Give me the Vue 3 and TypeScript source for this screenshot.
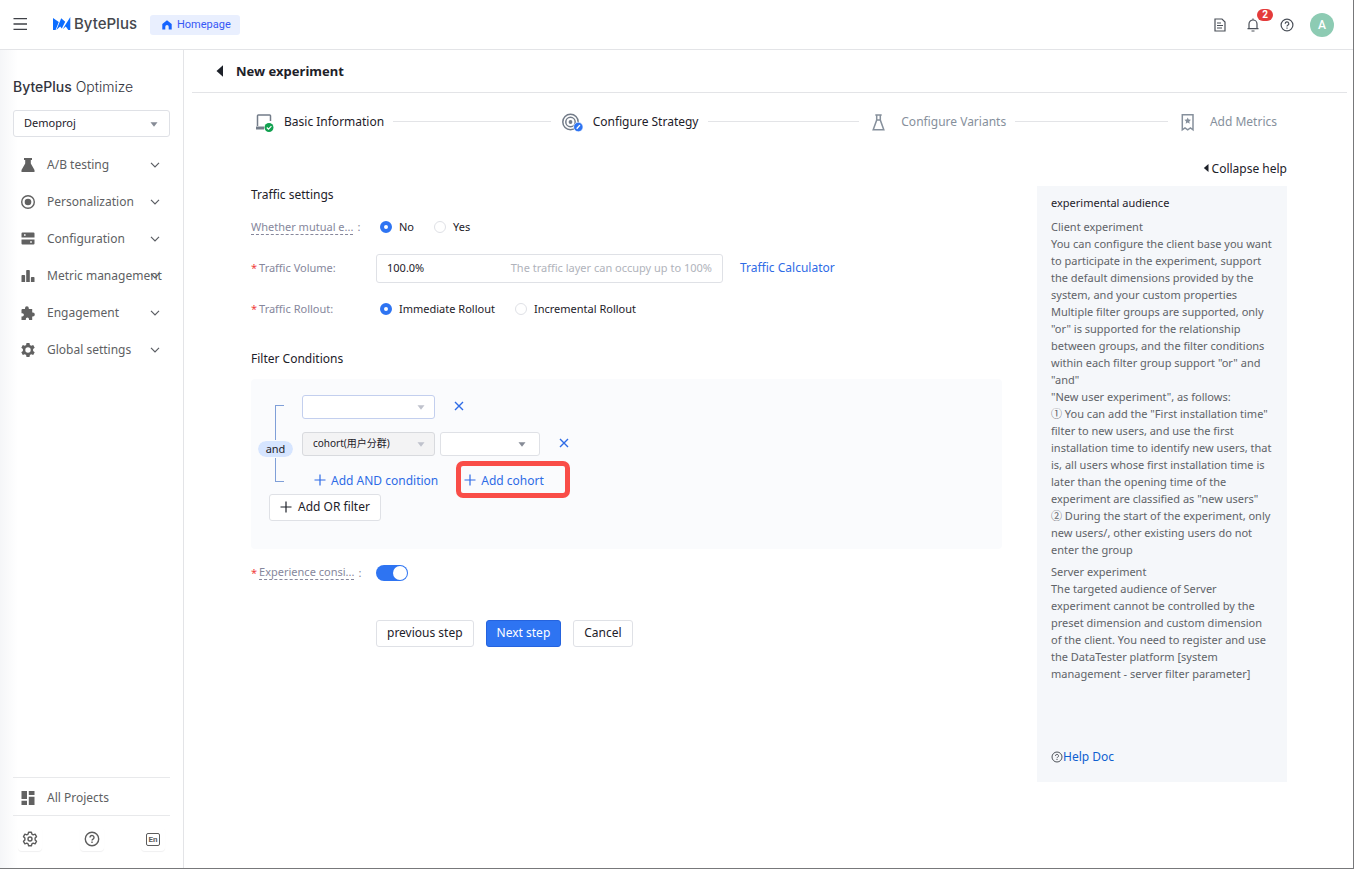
<script setup lang="ts">
import { ref } from 'vue'

interface NavItem {
  label: string
  icon: string
}

interface Step {
  label: string
  icon: string
  muted: boolean
}

const navItems: NavItem[] = [
  { label: 'A/B testing', icon: 'flask' },
  { label: 'Personalization', icon: 'target' },
  { label: 'Configuration', icon: 'server' },
  { label: 'Metric management', icon: 'bars' },
  { label: 'Engagement', icon: 'puzzle' },
  { label: 'Global settings', icon: 'gear' },
]

const steps: Step[] = [
  { label: 'Basic Information', icon: 'laptop', muted: false },
  { label: 'Configure Strategy', icon: 'rings', muted: false },
  { label: 'Configure Variants', icon: 'beaker', muted: true },
  { label: 'Add Metrics', icon: 'bookmark', muted: true },
]

const clientHelp: string[] = [
  'Client experiment',
  'You can configure the client base you want to participate in the experiment, support the default dimensions provided by the system, and your custom properties',
  'Multiple filter groups are supported, only "or" is supported for the relationship between groups, and the filter conditions within each filter group support "or" and "and"',
  '"New user experiment", as follows:',
  '① You can add the "First installation time" filter to new users, and use the first installation time to identify new users, that is, all users whose first installation time is later than the opening time of the experiment are classified as "new users"',
  '② During the start of the experiment, only new users/, other existing users do not enter the group',
]

const serverHelp: string[] = [
  'Server experiment',
  'The targeted audience of Server experiment cannot be controlled by the preset dimension and custom dimension of the client. You need to register and use the DataTester platform [system management - server filter parameter]',
]

const mutual = ref('no')
const rollout = ref('immediate')
const volume = ref('100.0%')
const consistent = ref(true)
</script>

<template>
  <div class="app">
    <header class="topbar">
      <button class="icon-btn menu" aria-label="Menu">
        <svg width="14" height="12" viewBox="0 0 14 12"><path d="M.5 .7h13.500M.5 6h13.500M.5 11.300h13.500" stroke="#3f4147" stroke-width="1.300" /></svg>
      </button>
      <a class="brand" href="#">
        <svg width="18" height="14" viewBox="0 0 18 14"><path fill="#0b6cff" d="M0 1l5.800 4L2.600 13H0zM3.400 13L8.200 1.200l4 3.600-3.400 6.700-1.700-2zM9.600 12.300L17.300 0v13h-2L12.800 9.400z" /></svg>
        <span>BytePlus</span>
      </a>
      <a class="home" href="#">
        <svg width="10" height="10" viewBox="0 0 10 10"><path fill="#1664ff" d="M5 .3L.3 4v5.500h3V6.800a1.700 1.700 0 0 1 3.400 0v2.700h3V4z" /></svg>
        Homepage
      </a>
      <div class="tools">
        <button class="icon-btn" aria-label="Documents">
          <svg width="12" height="14" viewBox="0 0 12 14" fill="none" stroke="#4b5059" stroke-width="1.200"><path d="M1 1h7l3 3v9H1z" /><path d="M3 5h4M3 7.500h6M3 10h5" /></svg>
        </button>
        <button class="icon-btn" aria-label="Notifications">
          <svg width="12" height="14" viewBox="0 0 12 14" fill="none" stroke="#4b5059" stroke-width="1.200"><path d="M.5 10.600h11M2 10.500V6a4 4 0 0 1 8 0v4.500M6 .5v1.500M4.500 13h3" /></svg>
          <span class="badge">2</span>
        </button>
        <button class="icon-btn" aria-label="Help">
          <svg width="14" height="14" viewBox="0 0 14 14" fill="none" stroke="#4b5059" stroke-width="1.200"><circle cx="7" cy="7" r="5.900" /><path d="M5.200 5.700a1.800 1.800 0 1 1 2.600 1.600c-.6.3-.8.600-.8 1.100M7 9.500v1.200" /></svg>
        </button>
        <button class="avatar" aria-label="Account">A</button>
      </div>
    </header>

    <div class="body">
      <aside class="sidebar">
        <div class="product"><b>BytePlus</b> Optimize</div>
        <div class="select project">
          <select aria-label="Project"><option>Demoproj</option></select>
          <svg class="caret" width="8" height="5" viewBox="0 0 8 5"><path d="M.5.300h7L4 4.700z" /></svg>
        </div>
        <nav class="nav">
          <a v-for="item in navItems" :key="item.label" class="nav-item" href="#">
            <svg class="nav-icon" width="16" height="16" viewBox="0 0 16 16">
              <path v-if="item.icon === 'flask'" d="M4 1h8v2h-1.200v3.500L14.500 13v2h-13v-2L5.200 6.500V3H4z" />
              <g v-else-if="item.icon === 'target'"><circle cx="8" cy="8" r="6.300" fill="none" stroke="#616161" stroke-width="1.400" /><circle cx="8" cy="8" r="3.300" /></g>
              <path v-else-if="item.icon === 'server'" fill-rule="evenodd" d="M2.500 1.500h11a1 1 0 0 1 1 1v4h-13v-4a1 1 0 0 1 1-1zM4 3.200v1.600h1.600V3.200zM1.500 8.500h13v4a1 1 0 0 1-1 1h-11a1 1 0 0 1-1-1zM10.200 10.200v1.600h1.600v-1.600z" />
              <path v-else-if="item.icon === 'bars'" d="M2.300 7h2a.8.8 0 0 1 .8.8V14H1.500V7.800A.8.800 0 0 1 2.300 7zM7 2h2a.8.800 0 0 1 .8.800V14H6.200V2.800A.8.800 0 0 1 7 2zM11.700 9h2a.8.800 0 0 1 .8.800V14h-3.600V9.800a.8.800 0 0 1 .8-.8z" />
              <path v-else-if="item.icon === 'puzzle'" d="M2.500 4H5v-.8a1.900 1.900 0 0 1 3.800 0V4h3.400v3.600h.7a1.900 1.900 0 0 1 0 3.800h-.7V15H9v-.8a1.600 1.600 0 0 0-3.200 0v.8H1.500v-3.600h.8a1.600 1.600 0 0 0 0-3.200h-.8V5a1 1 0 0 1 1-1z" />
              <path v-else fill-rule="evenodd" d="M6.500 1h3l.4 2 1.300.8 2-.7 1.500 2.600-1.600 1.400v1.800l1.600 1.400-1.500 2.600-2-.7-1.300.8-.4 2h-3l-.4-2-1.300-.8-2 .7-1.500-2.600 1.600-1.400V7.100L1.300 5.700l1.500-2.600 2 .7L6.100 3zM8 5.300a2.700 2.700 0 1 0 0 5.400 2.700 2.700 0 0 0 0-5.400z" />
            </svg>
            <span class="nav-label">{{ item.label }}</span>
            <svg class="chevron" width="10" height="6" viewBox="0 0 10 6"><path d="M1 .8l4 4 4-4" fill="none" stroke="#5a5d63" stroke-width="1.200" /></svg>
          </a>
        </nav>
        <a class="all-projects" href="#">
          <svg class="nav-icon" width="16" height="16" viewBox="0 0 16 16"><path d="M1.500 1H7v8H1.500zM8.800 1h5.700v4H8.800zM8.800 6.800h5.700V15H8.800zM1.500 10.800H7V15H1.500z" /></svg>
          <span>All Projects</span>
        </a>
        <div class="side-tools">
          <button class="side-btn" aria-label="Settings">
            <svg width="16" height="16" viewBox="0 0 16 16" fill="none" stroke="#5c5c5c" stroke-width="1.400" stroke-linejoin="round"><path d="M6.600 1.200h2.800l.5 1.900 1.300.7 1.900-.6 1.400 2.500-1.400 1.400v1.800l1.400 1.400-1.400 2.500-1.900-.6-1.300.7-.5 1.900H6.600l-.5-1.900-1.300-.7-1.900.6-1.400-2.500 1.400-1.400V7.100L1.500 5.700l1.400-2.500 1.900.6 1.300-.7z" /><circle cx="8" cy="8" r="2" /></svg>
          </button>
          <button class="side-btn" aria-label="Support">
            <svg width="16" height="16" viewBox="0 0 16 16" fill="none" stroke="#5c5c5c" stroke-width="1.400"><circle cx="8" cy="8" r="6.700" /><path d="M6 6.400a2 2 0 1 1 3 1.800c-.7.400-1 .8-1 1.400M8 10.600V12" /></svg>
          </button>
          <button class="side-btn lang" aria-label="Language"><span>En</span></button>
        </div>
      </aside>

      <main class="main">
        <div class="title-row">
          <button class="icon-btn" aria-label="Back">
            <svg width="8" height="12" viewBox="0 0 8 12"><path d="M7 .3v11.400L.5 6z" fill="#1d2129" /></svg>
          </button>
          <h1>New experiment</h1>
        </div>

        <div class="content">
          <ol class="steps">
            <li v-for="step in steps" :key="step.label" class="step" :class="{ muted: step.muted }">
              <svg class="step-icon" width="22" height="20" viewBox="0 0 22 20" fill="none" stroke="#86909c" stroke-width="1.500">
                <g v-if="step.icon === 'laptop'">
                  <path d="M4.500 13V2.800a.8.800 0 0 1 .8-.8h11.400a.8.800 0 0 1 .8.800V8" stroke="#737c89" />
                  <path d="M3 15h8" stroke="#737c89" stroke-width="3" />
                  <circle cx="16" cy="14.500" r="4.500" fill="#12a150" stroke="none" /><path d="M13.800 14.500l1.700 1.700 2.900-3" stroke="#fff" stroke-width="1.200" />
                </g>
                <g v-else-if="step.icon === 'rings'">
                  <circle cx="8.500" cy="9" r="7.700" stroke="#737c89" /><circle cx="8.500" cy="9" r="4.700" stroke="#737c89" /><circle cx="8.500" cy="9" r="1.900" fill="#737c89" stroke="none" />
                  <circle cx="16.300" cy="14" r="4.700" fill="#2e74f2" stroke="#fff" stroke-width=".6" /><path d="M14.700 15.700l3.200-3.600" stroke="#fff" stroke-width="1.400" />
                </g>
                <path v-else-if="step.icon === 'beaker'" d="M5.300 2h6.400M6.700 2v5L3.200 16.800h10.600L10.300 7V2M6.500 7h4" />
                <g v-else>
                  <path d="M3.300 1.800h10.700v15l-2.600-1.900-2.700 1.900-2.700-1.900-2.700 1.900z" /><path d="M8.700 4.400l1 2.100 2.300.3-1.700 1.600.4 2.300-2-1.100-2 1.100.4-2.300-1.700-1.600 2.300-.3z" fill="#86909c" stroke="none" />
                </g>
              </svg>
              <span>{{ step.label }}</span>
              <i class="step-line" />
            </li>
          </ol>

          <div class="columns">
            <form class="form" @submit.prevent>
              <h2>Traffic settings</h2>
              <div class="row">
                <div class="label"><span class="dashed">Whether mutual e...</span><span class="colon">:</span></div>
                <div class="radios">
                  <label><input v-model="mutual" type="radio" name="mutual" value="no" />No</label>
                  <label><input v-model="mutual" type="radio" name="mutual" value="yes" />Yes</label>
                </div>
              </div>
              <div class="row">
                <label class="label" for="volume"><em>*</em>Traffic Volume:</label>
                <div class="volume">
                  <input id="volume" v-model="volume" type="text" />
                  <span>The traffic layer can occupy up to 100%</span>
                </div>
                <a class="calc" href="#">Traffic Calculator</a>
              </div>
              <div class="row">
                <div class="label"><em>*</em>Traffic Rollout:</div>
                <div class="radios">
                  <label><input v-model="rollout" type="radio" name="rollout" value="immediate" />Immediate Rollout</label>
                  <label><input v-model="rollout" type="radio" name="rollout" value="incremental" />Incremental Rollout</label>
                </div>
              </div>

              <h2 class="filter-title">Filter Conditions</h2>
              <div class="filters">
                <div class="group">
                  <div class="bracket"><span class="pill">and</span></div>
                  <div class="conditions">
                    <div class="condition">
                      <div class="select wide active">
                        <select aria-label="Condition"><option></option></select>
                        <svg class="caret" width="8" height="5" viewBox="0 0 8 5"><path d="M.5.300h7L4 4.700z" /></svg>
                      </div>
                      <button class="icon-btn remove" aria-label="Remove condition"><svg width="10" height="10" viewBox="0 0 10 10"><path d="M1 1l8 8M9 1L1 9" stroke="#2e6be6" stroke-width="1.400" /></svg></button>
                    </div>
                    <div class="condition">
                      <div class="select wide disabled">
                        <select aria-label="Property" disabled><option>cohort(用户分群)</option></select>
                        <svg class="caret" width="8" height="5" viewBox="0 0 8 5"><path d="M.5.300h7L4 4.700z" /></svg>
                      </div>
                      <div class="select narrow">
                        <select aria-label="Cohort"><option></option></select>
                        <svg class="caret" width="8" height="5" viewBox="0 0 8 5"><path d="M.5.300h7L4 4.700z" /></svg>
                      </div>
                      <button class="icon-btn remove" aria-label="Remove cohort"><svg width="10" height="10" viewBox="0 0 10 10"><path d="M1 1l8 8M9 1L1 9" stroke="#2e6be6" stroke-width="1.400" /></svg></button>
                    </div>
                    <div class="adders">
                      <button class="add"><svg width="12" height="12" viewBox="0 0 12 12"><path d="M6 .5v11M.5 6h11" stroke="currentColor" stroke-width="1.200" /></svg>Add AND condition</button>
                      <button class="add highlighted"><svg width="12" height="12" viewBox="0 0 12 12"><path d="M6 .5v11M.5 6h11" stroke="currentColor" stroke-width="1.200" /></svg>Add cohort</button>
                    </div>
                  </div>
                </div>
                <button class="btn or"><svg width="12" height="12" viewBox="0 0 12 12"><path d="M6 .5v11M.5 6h11" stroke="currentColor" stroke-width="1.200" /></svg>Add OR filter</button>
              </div>

              <div class="row last">
                <label class="label" for="consistent"><em>*</em><span class="dashed">Experience consi...</span><span class="colon">:</span></label>
                <input id="consistent" v-model="consistent" class="switch" type="checkbox" role="switch" />
              </div>
              <div class="actions">
                <button class="btn">previous step</button>
                <button class="btn primary">Next step</button>
                <button class="btn">Cancel</button>
              </div>
            </form>

            <aside class="help">
              <button class="collapse"><svg width="6" height="8" viewBox="0 0 6 8"><path d="M5.500 0v8L.8 4z" fill="#1d2129" /></svg>Collapse help</button>
              <section class="panel">
                <h3>experimental audience</h3>
                <div class="para"><p v-for="text in clientHelp" :key="text">{{ text }}</p></div>
                <div class="para"><p v-for="text in serverHelp" :key="text">{{ text }}</p></div>
                <a class="doc" href="#">
                  <svg width="12" height="12" viewBox="0 0 12 12" fill="none" stroke="#4e5359" stroke-width="1"><circle cx="6" cy="6" r="5" /><path d="M4.500 4.900a1.500 1.500 0 1 1 2.200 1.300c-.5.3-.7.500-.7 1M6 8v1" /></svg>Help Doc
                </a>
              </section>
            </aside>
          </div>
        </div>
      </main>
    </div>
  </div>
</template>

<style>
body {
  margin: 0;
}
</style>

<style scoped>
.app,
.app * {
  box-sizing: border-box;
}
.app {
  display: flex;
  flex-direction: column;
  min-height: 100vh;
  border-right: 1px solid #77787a;
  border-bottom: 1px solid #77787a;
  background: #fff;
  color: #1d2129;
  font: 12px/17px "Noto Sans", "Noto Sans CJK SC", sans-serif;
}
a {
  color: inherit;
  text-decoration: none;
}
button,
input,
select {
  margin: 0;
  padding: 0;
  border: 0;
  background: none;
  color: inherit;
  font: inherit;
}
svg {
  display: block;
  flex: none;
}
h1,
h2,
h3,
p,
ol {
  margin: 0;
  padding: 0;
  font-weight: 400;
}
.icon-btn {
  position: relative;
  display: flex;
  align-items: center;
  justify-content: center;
}

/* Top bar */
.topbar {
  display: flex;
  align-items: center;
  height: 50px;
  padding: 0 19px 0 13px;
  border-bottom: 1px solid #e3e4e7;
}
.menu {
  padding-bottom: 2px;
}
.brand {
  display: flex;
  align-items: center;
  gap: 3px;
  margin: 0 13px 2px 26px;
  color: #45474d;
  font: 500 15px/20px Inter, sans-serif;
}
.home {
  display: flex;
  align-items: center;
  gap: 5px;
  height: 20px;
  padding: 0 9px 0 12px;
  border-radius: 3px;
  background: #e9effe;
  color: #3658f5;
  font: 11px/18px Roboto, sans-serif;
}
.tools {
  display: flex;
  align-items: center;
  gap: 21px;
  margin-left: auto;
}
.badge {
  position: absolute;
  top: -9px;
  left: 10px;
  width: 16px;
  border-radius: 6px;
  background: #e43b3b;
  color: #fff;
  font: 700 10px/12px Roboto, sans-serif;
}
.avatar {
  width: 24px;
  height: 24px;
  margin-left: -5px;
  border-radius: 50%;
  background: #8dcbb3;
  color: #fff;
  font: 500 12px/24px Roboto, sans-serif;
}

/* Sidebar */
.body {
  display: flex;
  flex: 1;
}
.sidebar {
  display: flex;
  flex: none;
  flex-direction: column;
  width: 184px;
  padding: 26px 13px 16px;
  border-right: 1px solid #e3e4e7;
  background: linear-gradient(90deg, #f5f6f8, #fff 18px);
}
.product {
  color: #33343d;
  font: 300 14px/22px Inter, sans-serif;
}
.product b {
  font-weight: 500;
}
.select {
  position: relative;
  border: 1px solid #dfe1e6;
  border-radius: 3px;
  background: #fff;
}
.select select {
  display: block;
  width: 100%;
  height: 100%;
  padding: 0 22px 2px 10px;
  appearance: none;
  font-size: 11px;
  opacity: 1;
}
.caret {
  position: absolute;
  top: 50%;
  right: 11px;
  margin-top: -2px;
  fill: #868b96;
  pointer-events: none;
}
.project {
  height: 27px;
  margin-top: 12px;
}
.nav {
  margin-top: 9px;
}
.nav-item {
  display: flex;
  align-items: center;
  height: 37px;
  padding: 0 10px 0 7px;
  color: #5e5f63;
}
.nav-icon {
  margin-right: 11px;
  fill: #616161;
}
.nav-label {
  flex: 1;
  min-width: 0;
  white-space: nowrap;
}
.all-projects {
  display: flex;
  align-items: center;
  height: 39px;
  margin-top: auto;
  padding: 2px 0 0 7px;
  border-top: 1px solid #e8e9eb;
  border-bottom: 1px solid #e8e9eb;
  color: #5e5f63;
}
.side-tools {
  display: flex;
  justify-content: space-between;
  padding: 11px 5px 1px;
}
.side-btn {
  display: flex;
  align-items: center;
  justify-content: center;
  width: 24px;
  height: 24px;
  border-radius: 4px;
  box-shadow: 0 1px 1px #f0f0f1;
}
.lang span {
  width: 14px;
  height: 13px;
  border: 1px solid #5c5c5c;
  border-radius: 2px;
  color: #5c5c5c;
  font: 700 8px/11px Roboto, sans-serif;
}

/* Main area */
.main {
  flex: 1;
  min-width: 0;
}
.title-row {
  display: flex;
  align-items: center;
  gap: 12px;
  height: 43px;
  margin: 0 6px 0 8px;
  padding-left: 24px;
  border-bottom: 1px solid #e3e4e7;
}
h1 {
  font-size: 13px;
  font-weight: 700;
  line-height: 20px;
}
.content {
  padding: 17px 66px 0 67px;
}
.steps {
  display: flex;
  list-style: none;
}
.step {
  display: flex;
  flex: 1;
  align-items: center;
  height: 22px;
  white-space: nowrap;
}
.step-icon {
  margin: 3px 9px 0 2px;
}
.step-line {
  flex: 1;
  height: 1px;
  margin: 0 9px;
  background: #e3e4e7;
}
.step:last-child {
  flex: none;
  padding-right: 10px;
}
.step:last-child .step-line {
  display: none;
}
.muted {
  color: #86909c;
}
.columns {
  display: flex;
  gap: 35px;
  margin-top: 26px;
}

/* Form */
.form {
  flex: 1;
  min-width: 0;
  padding-top: 27px;
}
.row {
  display: flex;
  align-items: center;
  height: 41px;
  font-size: 11px;
}
h2 {
  font-size: 12px;
  line-height: 20px;
}
h2 + .row {
  margin-top: 2px;
}
.label {
  display: flex;
  align-items: center;
  width: 125px;
  padding-bottom: 2px;
  color: #86879c;
}
.label em {
  margin-right: 2px;
  color: #f0413c;
  font-style: normal;
}
.dashed {
  border-bottom: 1px dashed #86879c;
  line-height: 15px;
}
.colon {
  margin-left: 4px;
}
.radios {
  display: flex;
  gap: 20px;
  padding: 0 0 2px 4px;
}
.radios label {
  display: flex;
  align-items: center;
  gap: 7px;
}
.radios input {
  width: 12px;
  height: 12px;
  border: 1px solid #dfe1e6;
  border-radius: 50%;
  appearance: none;
  background: #fff;
}
.radios input:checked {
  border: 4px solid #2e74f2;
}
.volume {
  display: flex;
  align-items: center;
  width: 347px;
  height: 29px;
  padding: 0 10px 2px;
  border: 1px solid #dfe1e6;
  border-radius: 3px;
}
.volume input {
  flex: 1;
  min-width: 0;
}
.volume span {
  color: #b0b3bb;
}
.calc {
  margin-left: 17px;
  padding-bottom: 2px;
  color: #2e6be6;
  font-size: 12px;
}
.filter-title {
  margin-top: 19px;
}
.filters {
  height: 170px;
  margin-top: 10px;
  padding: 16px 18px 0 0;
  border-radius: 4px;
  background: #fafbfd;
}
.group {
  display: flex;
}
.bracket {
  position: relative;
  display: flex;
  align-items: center;
  width: 51px;
  padding: 11px 0 0 7px;
}
.bracket::before {
  content: "";
  position: absolute;
  top: 10px;
  bottom: 9px;
  left: 24px;
  width: 8px;
  border: 1px solid #7f9fd8;
  border-right: 0;
}
.pill {
  position: relative;
  width: 35px;
  border-radius: 8px;
  background: #d6e5ff;
  outline: 1px solid #fafbfd;
  font-size: 11px;
  line-height: 16px;
  text-align: center;
}
.condition {
  display: flex;
  height: 24px;
  margin-bottom: 13px;
}
.wide {
  width: 133px;
}
.narrow {
  width: 100px;
  margin-left: 5px;
}
.narrow .caret {
  right: 13px;
}
.wide .caret {
  right: 9px;
  fill: #bfc2cc;
}
.active {
  border-color: #c3cfee;
}
.disabled {
  border-color: #d8dade;
  background: #f3f3f4;
}
.disabled select {
  font-size: 10px;
}
.remove {
  width: 20px;
  height: 22px;
  margin-left: 14px;
}
.adders {
  display: flex;
  gap: 26px;
  padding-left: 12px;
}
.add {
  position: relative;
  display: flex;
  align-items: center;
  gap: 5px;
  height: 22px;
  color: #2e6be6;
}
.highlighted::after {
  content: "";
  position: absolute;
  inset: -8px -26px -7px -8px;
  border: 5px solid #f94d48;
  border-radius: 7px;
}
.btn {
  display: flex;
  align-items: center;
  height: 27px;
  padding: 0 10px 2px;
  border: 1px solid #dfe1e6;
  border-radius: 3px;
  background: #fff;
}
.or {
  gap: 6px;
  margin: 3px 0 0 18px;
}
.row.last {
  height: 49px;
  padding-bottom: 1px;
}
.switch {
  width: 32px;
  height: 16px;
  padding: 1px;
  border-radius: 8px;
  appearance: none;
  background: #c9cdd4;
}
.switch::before {
  content: "";
  display: block;
  width: 14px;
  height: 14px;
  border-radius: 50%;
  background: #fff;
}
.switch:checked {
  background: #2e74f2;
}
.switch:checked::before {
  margin-left: auto;
}
.actions {
  display: flex;
  gap: 12px;
  margin: 22px 0 0 125px;
}
.primary {
  border-color: #2563de;
  background: #2e74f2;
  color: #fff;
}

/* Help column */
.help {
  flex: none;
  width: 250px;
}
.collapse {
  display: flex;
  align-items: center;
  gap: 3px;
  height: 20px;
  margin-left: auto;
}
.panel {
  margin-top: 8px;
  padding: 8px 14px 17px;
  background: #f5f7fa;
  color: #5f6368;
  font-size: 11px;
}
h3 {
  margin-bottom: 7px;
  color: #1d2129;
  font-size: 11px;
}
.para {
  margin-bottom: 5px;
}
.doc {
  display: flex;
  align-items: center;
  margin-top: 66px;
  color: #0f5fd0;
  font-size: 12px;
}
</style>
